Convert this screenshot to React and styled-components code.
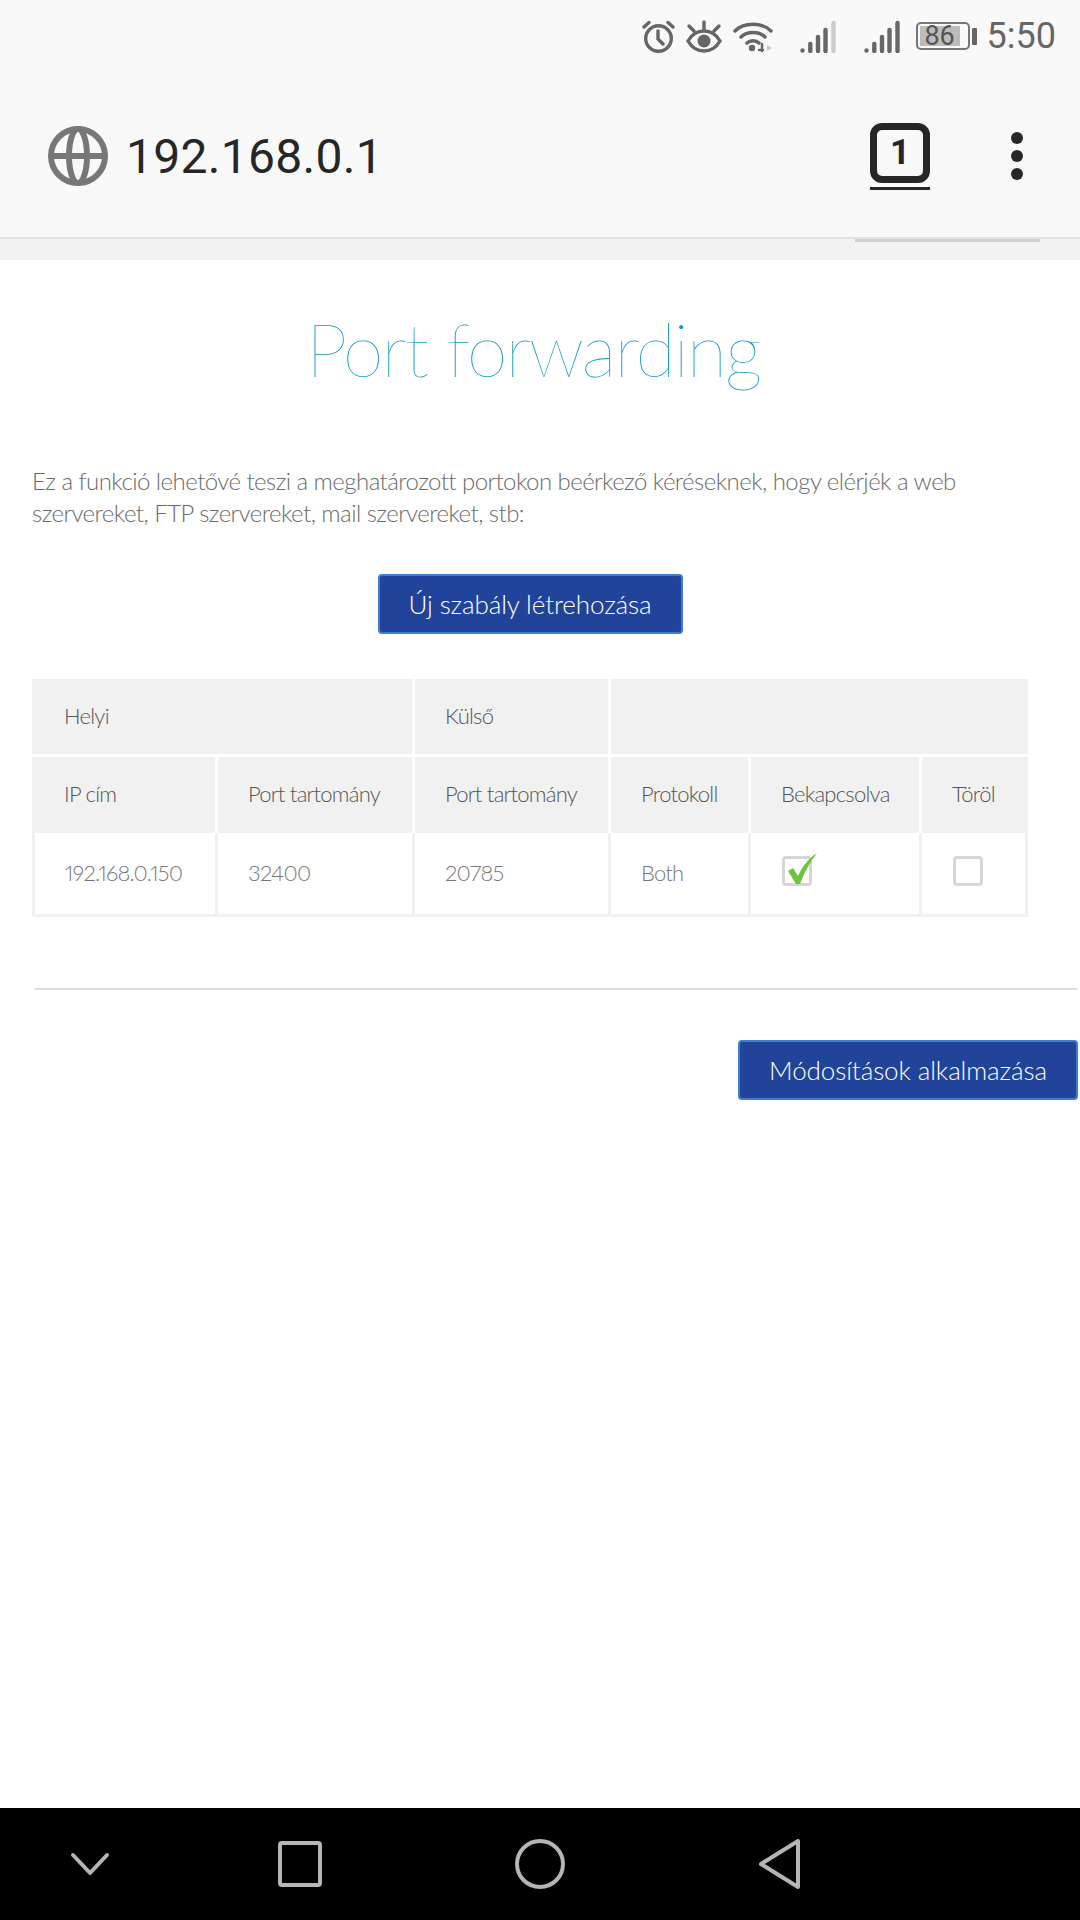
import React from 'react';
import styled, { createGlobalStyle } from 'styled-components';

const GlobalStyle = createGlobalStyle`
  html, body { margin: 0; padding: 0; background: #fff; }
  * { box-sizing: border-box; }
`;

const Screen = styled.div`
  width: 1080px;
  height: 1920px;
  display: flex;
  flex-direction: column;
  overflow: hidden;
  font-family: Lato, "Liberation Sans", sans-serif;
  font-weight: 300;
  font-variant-numeric: proportional-nums;
`;

const StatusBar = styled.div`
  height: 72px;
  padding-right: 24px;
  background: #f9f9f9;
  display: flex;
  align-items: center;
  justify-content: flex-end;
  color: #666;
`;

const StatusIcon = styled.svg`
  display: block;
  margin-left: ${(p) => p.$gap || 0}px;
`;

const Battery = styled.div`
  width: 54px;
  height: 28px;
  margin-left: 16px;
  padding: 2px;
  border: 2px solid #777;
  border-radius: 5px;
  display: flex;
`;

const BatteryFill = styled.div`
  flex: 1;
  margin-right: 6px;
  background: #bcbcbc;
  font: 400 27px/20px Roboto, sans-serif;
  color: #555;
  text-align: center;
`;

const BatteryNub = styled.div`
  width: 5px;
  height: 17px;
  margin-left: 2px;
  border-radius: 1px;
  background: #666;
`;

const Clock = styled.div`
  margin-left: 10px;
  font: 400 36px/1 Roboto, sans-serif;
  color: #666;
`;

const AddressBar = styled.div`
  height: 167px;
  padding: 3px 0 0 48px;
  background: #f9f9f9;
  border-bottom: 2px solid #e2e2e2;
  display: flex;
  align-items: center;
`;

const Url = styled.div`
  flex: 1;
  margin: 2px 0 0 18px;
  font: 400 48px/1 Roboto, sans-serif;
  letter-spacing: 0.3px;
  color: #262626;
`;

const TabCounter = styled.div`
  width: 60px;
  height: 67px;
  padding-bottom: 4px;
  margin-right: 81px;
  border-bottom: 3px solid #262626;
`;

const TabBox = styled.div`
  height: 60px;
  border: 7px solid #262626;
  border-radius: 12px;
  display: flex;
  align-items: center;
  justify-content: center;
  font: 700 35px/1 Roboto, sans-serif;
  color: #262626;
`;

const Dots = styled.div`
  width: 12px;
  margin-right: 57px;
  display: flex;
  flex-direction: column;
  gap: 6px;
`;

const Dot = styled.span`
  width: 12px;
  height: 12px;
  border-radius: 50%;
  background: #262626;
`;

const ScrollStrip = styled.div`
  height: 21px;
  padding-right: 40px;
  background: #f2f2f2;
  display: flex;
  justify-content: flex-end;
`;

const ScrollThumb = styled.div`
  width: 185px;
  height: 3px;
  background: #cfcfcf;
`;

const Content = styled.main`
  flex: 1;
  padding: 0 2px 0 32px;
  background: #fff;
  display: flex;
  flex-direction: column;
`;

const Title = styled.h1`
  width: 1002px;
  margin: 49px 0 0;
  font-size: 74px;
  line-height: 80px;
  font-weight: 100;
  text-align: center;
  color: #0c98c4;
  letter-spacing: -2.1px;
`;

const Intro = styled.p`
  width: 1010px;
  margin: 76px 0 0;
  font-size: 24px;
  line-height: 32px;
  letter-spacing: -0.55px;
  color: #6b6b6b;
`;

const BlueButton = styled.button`
  height: 60px;
  width: ${(p) => p.$w}px;
  padding: 0;
  border: 2px solid #3c7fcf;
  border-radius: 4px;
  background: #21449a;
  color: #fff;
  font: 300 26px/1 Lato, sans-serif;
  letter-spacing: -0.1px;
`;

const CenterRow = styled.div`
  width: 996px;
  margin-top: 45px;
  display: flex;
  justify-content: center;
`;

const RightRow = styled.div`
  margin-top: 50px;
  display: flex;
  justify-content: flex-end;
`;

const Table = styled.table`
  width: 996px;
  margin-top: 45px;
  table-layout: fixed;
  border-collapse: separate;
  border-spacing: 0;
  font-size: 22px;
  letter-spacing: -0.75px;
`;

const HeadCell = styled.th`
  height: ${(p) => p.$h}px;
  padding: 0 0 ${(p) => (p.$ruled ? 2 : 4)}px 30px;
  background: #f1f1f1;
  border-right: 3px solid #fff;
  border-bottom: ${(p) => (p.$ruled ? '3px solid #fff' : '0')};
  font-weight: 300;
  text-align: left;
  color: #555;
  &:first-child { padding-left: 32px; }
  &:last-child { border-right: 0; }
`;

const BodyCell = styled.td`
  height: 84px;
  padding: 0 0 2px 30px;
  border-right: 3px solid #f1f1f1;
  border-bottom: 3px solid #f1f1f1;
  color: #777;
  &:first-child {
    padding-left: 30px;
    border-left: 3px solid #f1f1f1;
  }
`;

const CheckBox = styled.span`
  display: block;
  position: relative;
  width: 30px;
  height: 30px;
  margin: -4px 0 0 1px;
  border: 3px solid #d6d6d6;
  border-radius: 4px;
`;

const Tick = styled.svg`
  position: absolute;
  left: 1px;
  top: -8px;
`;

const Divider = styled.hr`
  width: 1042px;
  margin: 71px 0 0 3px;
  border: 0;
  border-top: 2px solid #dcdcdc;
`;

const NavBar = styled.nav`
  height: 112px;
  background: #000;
  display: flex;
  align-items: center;
`;

const NavIcon = styled.svg`
  display: block;
  margin-left: ${(p) => p.$gap}px;
`;

const Alarm = () => (
  <StatusIcon width="33" height="33" viewBox="0 0 33 33" fill="none" stroke="#666" strokeWidth="3.4" strokeLinecap="round">
    <circle cx="16.5" cy="18.5" r="12.8" />
    <path d="M16 11v8l5 5M2 7l5-4.5M31 7l-5-4.5" />
  </StatusIcon>
);

const Eye = () => (
  <StatusIcon $gap={11} width="36" height="33" viewBox="0 0 36 33" fill="none" stroke="#666" strokeWidth="3.4" strokeLinecap="round">
    <path d="M2 21c4-7 9-10 16-10s12 3 16 10c-4 7-9 10-16 10S6 28 2 21z" />
    <circle cx="18" cy="21" r="6.5" fill="#666" stroke="none" />
    <path d="M18 2v7M3 6l5 5M33 6l-5 5" />
  </StatusIcon>
);

const Wifi = () => (
  <StatusIcon $gap={11} width="40" height="33" viewBox="0 0 40 33" fill="none" stroke="#666" strokeWidth="3.4" strokeLinecap="round">
    <path d="M2 11C11 2 29 2 38 11M8 17c6-6 18-6 24 0M14 23c3-3 9-3 12 0" />
    <circle cx="19" cy="28" r="3.2" fill="#666" stroke="none" />
    <path d="M26 30h4M29 24v7" strokeWidth="2.4" />
    <path d="M34 25l5 3-5 3z" fill="#ccc" stroke="none" />
  </StatusIcon>
);

const Signal = ({ gap, last }) => (
  <StatusIcon $gap={gap} width="36" height="33" viewBox="0 0 36 33" fill="none" stroke="#666" strokeWidth="4.4" strokeLinecap="round">
    <path d="M2.5 30.5v.1M10.3 24v7M18 17v14M25.5 10v21" />
    <path d="M33.5 3v28" stroke={last} />
  </StatusIcon>
);

const Globe = () => (
  <svg width="60" height="60" viewBox="0 0 60 60" fill="none" stroke="#777" strokeWidth="6">
    <circle cx="30" cy="30" r="27" />
    <ellipse cx="30" cy="30" rx="9" ry="27" />
    <path d="M3 30h54" />
  </svg>
);

const heads = ['IP cím', 'Port tartomány', 'Port tartomány', 'Protokoll', 'Bekapcsolva', 'Töröl'];
const colWidths = [186, 197, 196, 140, 171, 106];

export default function App() {
  return (
    <Screen>
      <GlobalStyle />
      <StatusBar>
        <Alarm />
        <Eye />
        <Wifi />
        <Signal gap={27} last="#ccc" />
        <Signal gap={28} last="#666" />
        <Battery>
          <BatteryFill>86</BatteryFill>
        </Battery>
        <BatteryNub />
        <Clock>5:50</Clock>
      </StatusBar>
      <AddressBar>
        <Globe />
        <Url>192.168.0.1</Url>
        <TabCounter>
          <TabBox>1</TabBox>
        </TabCounter>
        <Dots>
          <Dot />
          <Dot />
          <Dot />
        </Dots>
      </AddressBar>
      <ScrollStrip>
        <ScrollThumb />
      </ScrollStrip>
      <Content>
        <Title>Port forwarding</Title>
        <Intro>
          Ez a funkció lehetővé teszi a meghatározott portokon beérkező kéréseknek, hogy elérjék a web
          szervereket, FTP szervereket, mail szervereket, stb:
        </Intro>
        <CenterRow>
          <BlueButton $w={305}>Új szabály létrehozása</BlueButton>
        </CenterRow>
        <Table>
          <colgroup>
            {colWidths.map((w, i) => (
              <col key={i} width={w} />
            ))}
          </colgroup>
          <thead>
            <tr>
              <HeadCell $h={78} $ruled colSpan={2}>Helyi</HeadCell>
              <HeadCell $h={78} $ruled>Külső</HeadCell>
              <HeadCell $h={78} $ruled colSpan={3} />
            </tr>
            <tr>
              {heads.map((h, i) => (
                <HeadCell $h={76} key={i}>{h}</HeadCell>
              ))}
            </tr>
          </thead>
          <tbody>
            <tr>
              <BodyCell>192.168.0.150</BodyCell>
              <BodyCell>32400</BodyCell>
              <BodyCell>20785</BodyCell>
              <BodyCell>Both</BodyCell>
              <BodyCell>
                <CheckBox>
                  <Tick width="32" height="36" viewBox="0 0 32 36">
                    <path d="M2 20l5-3 5 8C16 16 22 8 31 2 24 11 18 22 14 33h-4z" fill="#6cc43f" />
                  </Tick>
                </CheckBox>
              </BodyCell>
              <BodyCell>
                <CheckBox />
              </BodyCell>
            </tr>
          </tbody>
        </Table>
        <Divider />
        <RightRow>
          <BlueButton $w={340}>Módosítások alkalmazása</BlueButton>
        </RightRow>
      </Content>
      <NavBar>
        <NavIcon $gap={70} width="40" height="24" viewBox="0 0 40 24" fill="none" stroke="#b5b5b5" strokeWidth="4" strokeLinecap="round" strokeLinejoin="round">
          <path d="M3 3l17 18L37 3" />
        </NavIcon>
        <NavIcon $gap={168} width="44" height="46" viewBox="0 0 44 46" fill="none" stroke="#b5b5b5" strokeWidth="4">
          <rect x="2" y="2" width="40" height="42" rx="2" />
        </NavIcon>
        <NavIcon $gap={193} width="50" height="50" viewBox="0 0 50 50" fill="none" stroke="#b5b5b5" strokeWidth="4">
          <circle cx="25" cy="25" r="23" />
        </NavIcon>
        <NavIcon $gap={193} width="44" height="52" viewBox="0 0 44 52" fill="none" stroke="#b5b5b5" strokeWidth="4" strokeLinejoin="round">
          <path d="M40 3v46L3 26z" />
        </NavIcon>
      </NavBar>
    </Screen>
  );
}
